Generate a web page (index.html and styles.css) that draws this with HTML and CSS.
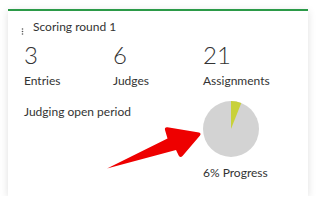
FILE: index.html
```html
<!DOCTYPE html>
<html>
<head>
<meta charset="utf-8">
<link rel="stylesheet" href="styles.css">
</head>
<body>
<div class="card">
  <div class="header">
    <svg class="dots" width="3" height="7" viewBox="0 0 3 7"><circle cx="1.5" cy="1" r="0.8"/><circle cx="1.5" cy="3.5" r="0.8"/><circle cx="1.5" cy="6" r="0.8"/></svg>
    <span class="title">Scoring round 1</span>
  </div>
  <div class="stats">
    <div class="stat"><div class="num">3</div><div class="label">Entries</div></div>
    <div class="stat"><div class="num">6</div><div class="label">Judges</div></div>
    <div class="stat"><div class="num">21</div><div class="label">Assignments</div></div>
  </div>
  <div class="bottom">
    <div class="period">Judging open period</div>
    <div class="progress">
      <svg class="pie" width="56" height="56" viewBox="0 0 56 56">
        <circle cx="28" cy="28" r="28" fill="#d3d3d3"/>
        <path d="M28 28 L28 0 A28 28 0 0 1 38.3 1.97 Z" fill="#c8d13a"/>
      </svg>
      <div class="ptext">6% Progress</div>
    </div>
  </div>
</div>
<svg class="arrow" width="320" height="209" viewBox="0 0 320 209">
  <path d="M107 168.5 L167.5 138.5 L165 130 Q164.3 127 167.5 127.3 L199 132.5 Q201.5 133.5 200 135.5 L182.5 156 Q180.5 158.3 178.8 155.8 L176 150 Z" fill="#ee0000"/>
</svg>
</body>
</html>
```
FILE: styles.css
```css
html, body {
  margin: 0;
  padding: 0;
  background: #ffffff;
}
body {
  padding: 9px 0 0 8px;
  font-family: Lato, "Liberation Sans", sans-serif;
  color: #333333;
}
.card {
  width: 300px;
  height: 187px;
  box-sizing: border-box;
  border-top: 2px solid #2b9a48;
  background: #ffffff;
  box-shadow: 0 2px 8px rgba(0, 0, 0, 0.13);
  padding: 8px 16px 0 16px;
}
.header {
  display: flex;
  align-items: flex-start;
  gap: 9px;
  margin-left: -3px;
  height: 15px;
}
.dots {
  fill: #555555;
  margin-top: 8.5px;
  flex: none;
}
.title {
  font-size: 12px;
  line-height: 15px;
}
.stats {
  display: grid;
  grid-template-columns: 89px 90px auto;
  margin-top: 6px;
}
.num {
  font-size: 24px;
  font-weight: 300;
  line-height: 29px;
}
.label {
  font-size: 12px;
  line-height: 15px;
  margin-top: 4px;
}
.bottom {
  display: grid;
  grid-template-columns: 179px auto;
  margin-top: 13px;
}
.period {
  font-size: 12px;
  line-height: 15px;
  padding-top: 3px;
}
.progress {
  display: flex;
  flex-direction: column;
  align-items: flex-start;
}
.pie {
  display: block;
}
.ptext {
  font-size: 12px;
  line-height: 15px;
  margin-top: 8px;
}
.arrow {
  position: absolute;
  left: 0;
  top: 0;
  pointer-events: none;
}
```
